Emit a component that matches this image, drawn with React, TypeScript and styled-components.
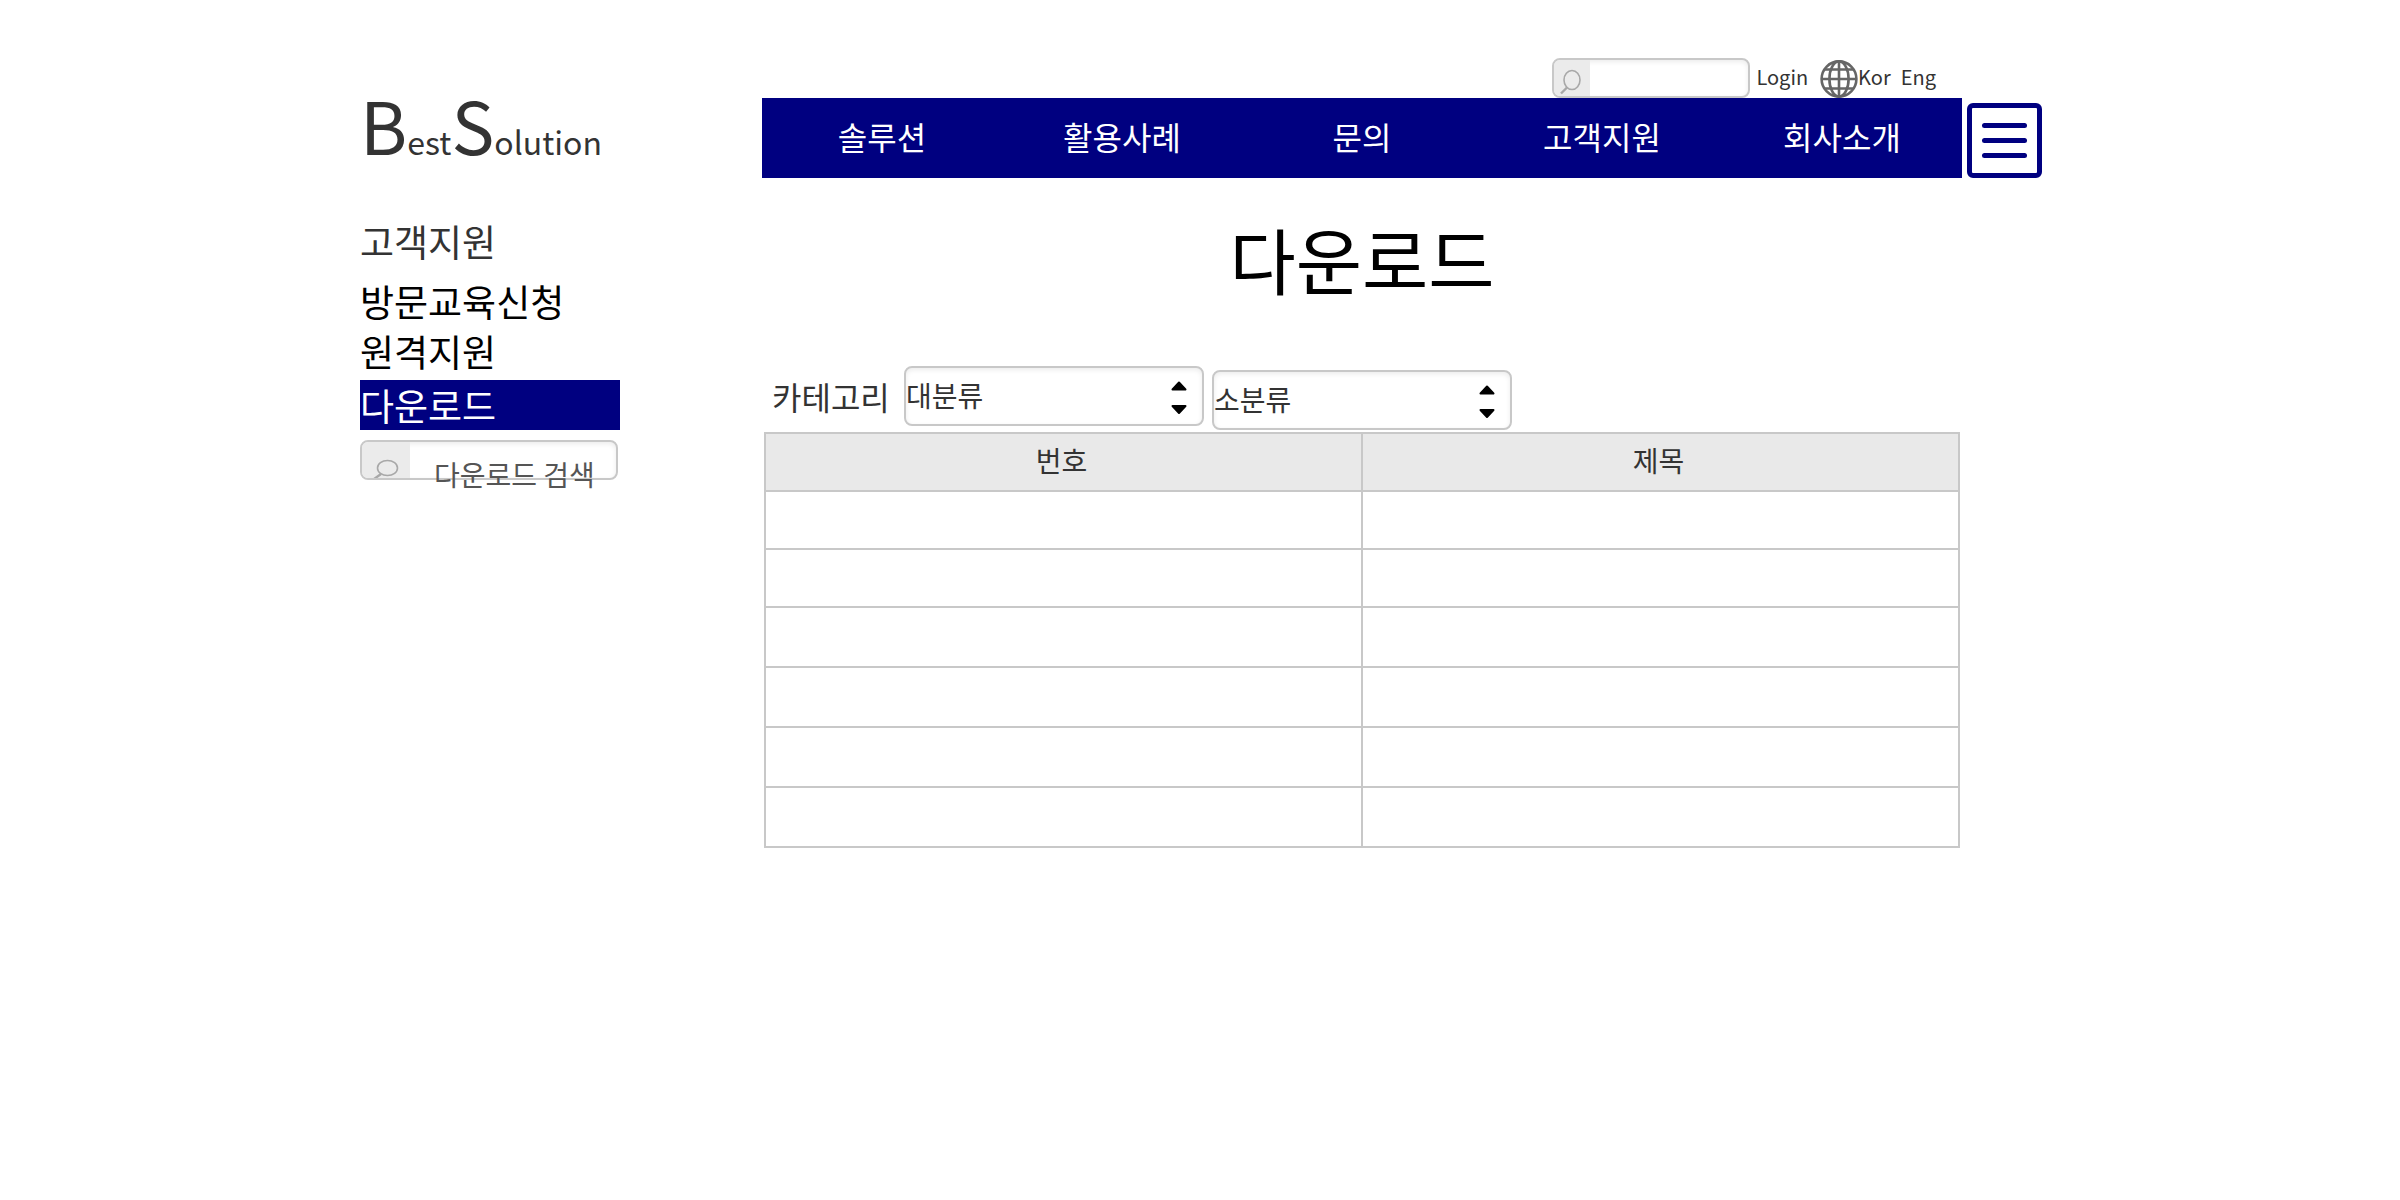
import React from "react";
import styled, { createGlobalStyle } from "styled-components";

const NAVY = "#000080";
const LINE = "#c8c8c8";
const INK = "#333333";

const GlobalStyle = createGlobalStyle`
  *, *::before, *::after { box-sizing: border-box; }
  body {
    margin: 0;
    background: #ffffff;
    color: ${INK};
    font-family: "Noto Sans CJK KR", "Noto Sans", sans-serif;
  }
  input, select, button { font: inherit; color: inherit; }
  a { color: inherit; text-decoration: none; }
  ul { margin: 0; padding: 0; list-style: none; }
`;

const Page = styled.div`
  padding: 58px calc(15% - 2px) 40px 15%;
`;

const Columns = styled.div`
  display: grid;
  grid-template-columns: 402px minmax(0, 1fr) 80px;
`;

const Logo = styled.a`
  align-self: end;
  padding-bottom: 18px;
  font-size: 32px;
  line-height: 1;
  white-space: nowrap;
`;

const Initial = styled.span`
  font-size: 72px;
`;

const Utility = styled.div`
  display: flex;
  justify-content: flex-end;
  height: 40px;
  padding-right: 26px;
  font-size: 20px;
  line-height: 38px;
`;

const UtilityLink = styled.a<{ $gap?: number }>`
  margin-left: ${(p) => p.$gap ?? 0}px;
`;

const LanguageIcon = styled.span`
  margin-left: 12px;
  svg { display: block; }
`;

const Frame = styled.div<{ $width: number }>`
  display: flex;
  align-items: flex-start;
  width: ${(p) => p.$width}px;
  height: 40px;
  border: 2px solid ${LINE};
  border-radius: 8px;
  box-shadow: inset 0 2px 5px rgba(0, 0, 0, 0.08);
`;

const IconCell = styled.label<{ $width: number }>`
  flex: none;
  width: ${(p) => p.$width}px;
  height: 36px;
  border-radius: 6px 0 0 6px;
  background: #ebebeb;
  overflow: hidden;
  svg { display: block; }
`;

const SearchInput = styled.input<{ $height: number }>`
  flex: 1;
  min-width: 0;
  height: ${(p) => p.$height}px;
  padding: 0 0 0 24px;
  border: 0;
  outline: 0;
  background: transparent;
  font-size: 28px;
  &::placeholder { color: #555555; opacity: 1; }
`;

const NavList = styled.ul`
  display: grid;
  grid-template-columns: repeat(5, 1fr);
  background: ${NAVY};
`;

const NavLink = styled.a`
  display: block;
  padding-bottom: 4px;
  color: #ffffff;
  font-size: 32px;
  line-height: 76px;
  text-align: center;
`;

const MenuButton = styled.button`
  display: flex;
  flex-direction: column;
  align-items: center;
  justify-content: center;
  gap: 10px;
  justify-self: end;
  align-self: end;
  width: 75px;
  height: 75px;
  padding: 0;
  border: 5px solid ${NAVY};
  border-radius: 6px;
  background: #ffffff;
`;

const MenuBar = styled.span`
  width: 45px;
  height: 5px;
  border-radius: 3px;
  background: ${NAVY};
`;

const Aside = styled.aside`
  width: 260px;
  padding-top: 38px;
  font-size: 37px;
`;

const AsideTitle = styled.h2`
  margin: 0 0 10px;
  font-size: inherit;
  font-weight: 400;
  line-height: 50px;
`;

const AsideLink = styled.a<{ $active?: boolean }>`
  display: block;
  margin-top: ${(p) => (p.$active ? 4 : 0)}px;
  color: ${(p) => (p.$active ? "#ffffff" : "#000000")};
  background: ${(p) => (p.$active ? NAVY : "transparent")};
  line-height: 50px;
`;

const AsideMenu = styled.ul`
  margin-bottom: 10px;
`;

const Title = styled.h1`
  margin: 0;
  padding-top: 30px;
  color: #000000;
  font-size: 72px;
  font-weight: 400;
  line-height: 100px;
  text-align: center;
`;

const Filters = styled.form`
  display: flex;
  align-items: flex-start;
  gap: 8px;
  padding: 58px 0 2px 10px;
`;

const FilterLabel = styled.label`
  width: 124px;
  font-size: 32px;
  line-height: 60px;
`;

const SelectBox = styled.div<{ $lowered?: boolean }>`
  position: relative;
  width: 300px;
  align-self: ${(p) => (p.$lowered ? "flex-end" : "flex-start")};
  margin-bottom: ${(p) => (p.$lowered ? 0 : 4)}px;
  svg {
    position: absolute;
    right: 16px;
    top: 14px;
    pointer-events: none;
  }
`;

const Select = styled.select`
  display: block;
  appearance: none;
  width: 100%;
  height: 60px;
  padding: 0 40px 2px 0;
  border: 2px solid ${LINE};
  border-radius: 8px;
  background: #ffffff;
  box-shadow: inset 0 2px 5px rgba(0, 0, 0, 0.08);
  font-size: 28px;
`;

const TableWrap = styled.div`
  padding: 0 2px;
`;

const Table = styled.table`
  width: 100%;
  border-collapse: collapse;
  table-layout: fixed;
  font-size: 28px;
  th, td {
    padding: 0;
    border: 2px solid ${LINE};
  }
  th {
    height: 58px;
    padding: 0 4px 4px 0;
    background: #e9e9e9;
    font-weight: 400;
    line-height: 40px;
  }
`;

const Cell = styled.td<{ $height: number }>`
  height: ${(p) => p.$height}px;
`;

const Globe = () => (
  <svg width="38" height="40" viewBox="0 0 38 40" fill="none" stroke="#666666" strokeWidth="2.6">
    <ellipse cx="19" cy="21" rx="17.4" ry="17.6" />
    <ellipse cx="19" cy="21" rx="9.6" ry="17.6" />
    <path d="M19 3.4v35.2M1.6 21h34.8M4.5 11.500h29M4.5 30.500h29" />
  </svg>
);

const Arrows = () => (
  <svg width="18" height="36" viewBox="0 0 18 36" fill="#000000" stroke="#000000" strokeWidth="2" strokeLinejoin="round">
    <path d="M9 2.500l6.500 7h-13z" />
    <path d="M9 33l6.500-7h-13z" />
  </svg>
);

const navItems = ["솔루션", "활용사례", "문의", "고객지원", "회사소개"];
const asideItems = ["방문교육신청", "원격지원", "다운로드"];
const rowHeights = [58, 58, 60, 60, 60, 60];

export default function App() {
  return (
    <>
      <GlobalStyle />
      <Page>
        <Columns as="header">
          <Logo href="#">
            <Initial>B</Initial>est<Initial>S</Initial>olution
          </Logo>
          <div>
            <Utility>
              <Frame $width={198}>
                <IconCell $width={36} htmlFor="site-search" aria-label="검색">
                  <svg width="36" height="36" viewBox="0 0 36 36" fill="none" stroke="#a8a8a8" strokeWidth="1.6">
                    <ellipse cx="18" cy="20" rx="8" ry="9.5" />
                    <path d="M13 27.5L7 33.5" strokeWidth="2.4" />
                  </svg>
                </IconCell>
                <SearchInput id="site-search" type="text" $height={36} />
              </Frame>
              <UtilityLink href="#" $gap={6}>Login</UtilityLink>
              <LanguageIcon><Globe /></LanguageIcon>
              <UtilityLink href="#">Kor</UtilityLink>
              <UtilityLink href="#" $gap={10}>Eng</UtilityLink>
            </Utility>
            <nav>
              <NavList>
                {navItems.map((item) => (
                  <li key={item}><NavLink href="#">{item}</NavLink></li>
                ))}
              </NavList>
            </nav>
          </div>
          <MenuButton type="button" aria-label="메뉴">
            <MenuBar /><MenuBar /><MenuBar />
          </MenuButton>
        </Columns>
        <Columns>
          <Aside>
            <AsideTitle>고객지원</AsideTitle>
            <AsideMenu>
              {asideItems.map((item) => (
                <li key={item}>
                  <AsideLink href="#" $active={item === "다운로드"}>{item}</AsideLink>
                </li>
              ))}
            </AsideMenu>
            <Frame $width={258}>
              <IconCell $width={48} htmlFor="download-search" aria-label="다운로드 검색">
                <svg width="48" height="36" viewBox="0 0 48 36" fill="none" stroke="#a8a8a8" strokeWidth="1.6">
                  <ellipse cx="25.5" cy="26" rx="10" ry="7.5" />
                  <path d="M19 32L10 38.5" strokeWidth="2.4" />
                </svg>
              </IconCell>
              <SearchInput id="download-search" type="text" placeholder="다운로드 검색" $height={64} />
            </Frame>
          </Aside>
          <main>
            <Title>다운로드</Title>
            <Filters>
              <FilterLabel htmlFor="major">카테고리</FilterLabel>
              <SelectBox>
                <Select id="major"><option>대분류</option></Select>
                <Arrows />
              </SelectBox>
              <SelectBox $lowered>
                <Select id="minor" aria-label="소분류"><option>소분류</option></Select>
                <Arrows />
              </SelectBox>
            </Filters>
            <TableWrap>
              <Table>
                <thead>
                  <tr><th scope="col">번호</th><th scope="col">제목</th></tr>
                </thead>
                <tbody>
                  {rowHeights.map((height, i) => (
                    <tr key={i}><Cell $height={height} /><Cell $height={height} /></tr>
                  ))}
                </tbody>
              </Table>
            </TableWrap>
          </main>
        </Columns>
      </Page>
    </>
  );
}
